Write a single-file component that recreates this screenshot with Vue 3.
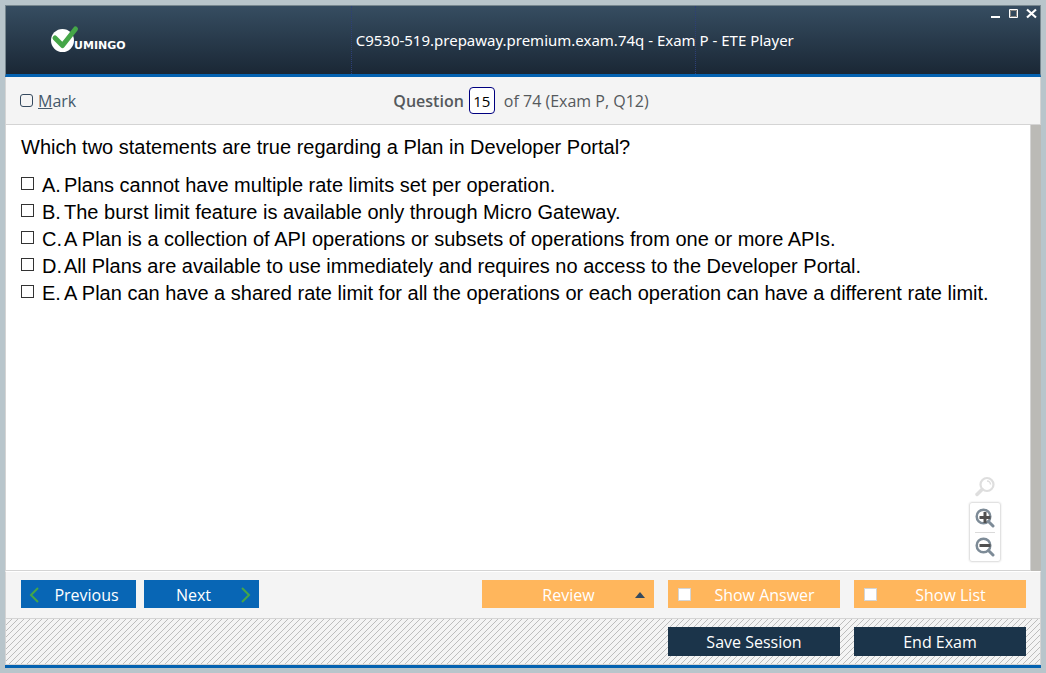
<script setup>
import { ref } from 'vue'

const options = [
  { letter: 'A', text: 'Plans cannot have multiple rate limits set per operation.' },
  { letter: 'B', text: 'The burst limit feature is available only through Micro Gateway.' },
  { letter: 'C', text: 'A Plan is a collection of API operations or subsets of operations from one or more APIs.' },
  { letter: 'D', text: 'All Plans are available to use immediately and requires no access to the Developer Portal.' },
  { letter: 'E', text: 'A Plan can have a shared rate limit for all the operations or each operation can have a different rate limit.' },
]
const chosen = ref([])
const marked = ref(false)
const number = ref('15')
const showAnswer = ref(false)
const showList = ref(false)
</script>

<template>
  <div class="desktop">
    <div class="window">
      <header class="header">
        <svg class="logo" width="84" height="30" viewBox="0 0 84 30" role="img" aria-label="Vumingo">
          <circle cx="12.500" cy="16.500" r="11.500" fill="#fff" />
          <path d="M5 14L12.500 21.500L25.500 5" fill="none" stroke="#45a648" stroke-width="5" stroke-linecap="round" stroke-linejoin="round" />
          <text class="logo-text" x="24" y="25">UMINGO</text>
        </svg>
        <h1 class="title">C9530-519.prepaway.premium.exam.74q - Exam P - ETE Player</h1>
        <div class="controls">
          <button type="button" aria-label="Minimize">
            <svg width="11" height="11" viewBox="0 0 11 11"><path d="M1 9h9" stroke="#fff" stroke-width="2" /></svg>
          </button>
          <button type="button" aria-label="Maximize">
            <svg width="11" height="11" viewBox="0 0 11 11"><path d="M1.500 1.500h8v8h-8z" fill="none" stroke="#fff" /><path d="M2.500 2.500h6v6h-6z" fill="none" stroke="#8a8782" /></svg>
          </button>
          <button type="button" aria-label="Close">
            <svg width="11" height="11" viewBox="0 0 11 11"><path d="M1 1.500l9 8M10 1.500l-9 8" stroke="#fff" stroke-width="2.200" /></svg>
          </button>
        </div>
      </header>

      <div class="toolbar">
        <label class="mark"><input v-model="marked" type="checkbox" class="mark-box"><span><u>M</u>ark</span></label>
        <div class="position">
          <label for="question-number">Question</label>
          <input id="question-number" v-model="number" type="text" class="number">
          <span>of 74 (Exam P, Q12)</span>
        </div>
      </div>

      <main class="content">
        <section class="question">
          <h2>Which two statements are true regarding a Plan in Developer Portal?</h2>
          <ul>
            <li v-for="option in options" :key="option.letter">
              <label class="option">
                <input v-model="chosen" type="checkbox" :value="option.letter">
                <span class="letter">{{ option.letter }}.</span>
                <span>{{ option.text }}</span>
              </label>
            </li>
          </ul>
          <div class="zoom">
            <svg width="22" height="22" viewBox="0 0 22 22" fill="none" stroke="#dedede">
              <circle cx="13" cy="8.500" r="6.500" stroke-width="2.200" />
              <path d="M13 5a3.500 3.500 0 0 1 3.500 3.500" stroke-width="1.500" />
              <path d="M8 13.500L3 18.500" stroke-width="3.500" stroke-linecap="round" />
            </svg>
            <div class="zoom-buttons">
              <button type="button" aria-label="Zoom in">
                <svg width="20" height="20" viewBox="0 0 20 20" fill="none">
                  <circle cx="8.500" cy="8.500" r="6.800" stroke="#7d8b97" stroke-width="2.500" />
                  <path d="M13.500 13.500L18 18" stroke="#7d8b97" stroke-width="3" stroke-linecap="round" />
                  <path d="M10 4v11M4.500 9.500h11" stroke="#505050" stroke-width="3" />
                </svg>
              </button>
              <button type="button" aria-label="Zoom out">
                <svg width="20" height="20" viewBox="0 0 20 20" fill="none">
                  <circle cx="8.500" cy="8.500" r="6.800" stroke="#7d8b97" stroke-width="2.500" />
                  <path d="M13.500 13.500L18 18" stroke="#7d8b97" stroke-width="3" stroke-linecap="round" />
                  <path d="M4.500 8.500h11" stroke="#505050" stroke-width="3" />
                </svg>
              </button>
            </div>
          </div>
        </section>
        <div class="scrollbar"></div>
      </main>

      <nav class="actions">
        <button type="button" class="btn blue">
          <svg width="12" height="18" viewBox="0 0 12 18"><path d="M9 2L2 9l7 7" fill="none" stroke="#45a648" stroke-width="2" /></svg>
          <span>Previous</span>
        </button>
        <button type="button" class="btn blue">
          <span>Next</span>
          <svg width="12" height="18" viewBox="0 0 12 18"><path d="M3 2l7 7-7 7" fill="none" stroke="#45a648" stroke-width="2" /></svg>
        </button>
        <div class="right">
          <button type="button" class="btn orange review">
            <span>Review</span>
            <svg width="10" height="6" viewBox="0 0 10 6"><path d="M0 6L5 0l5 6z" fill="#34495e" /></svg>
          </button>
          <label class="btn orange"><input v-model="showAnswer" type="checkbox"><span>Show Answer</span></label>
          <label class="btn orange"><input v-model="showList" type="checkbox"><span>Show List</span></label>
        </div>
      </nav>

      <footer class="session">
        <svg class="hatch" width="100%" height="100%" aria-hidden="true">
          <defs>
            <pattern id="hatch" width="6" height="6" patternUnits="userSpaceOnUse">
              <path d="M-1 7L7 -1M-1 1L1 -1M5 7L7 5" stroke="#bdbdbd" stroke-width="1" />
            </pattern>
          </defs>
          <rect width="100%" height="100%" fill="url(#hatch)" />
        </svg>
        <button type="button" class="btn dark">Save Session</button>
        <button type="button" class="btn dark">End Exam</button>
      </footer>
    </div>
  </div>
</template>

<style>
body {
  margin: 0;
}
</style>

<style scoped>
* {
  box-sizing: border-box;
}
button {
  border: 0;
  padding: 0;
  background: none;
  font: inherit;
  color: inherit;
}
svg {
  display: block;
  flex: none;
}
input {
  appearance: none;
  margin: 0;
  flex: none;
}
input[type="checkbox"]:checked {
  background: #34495e;
}
.desktop {
  display: flex;
  min-height: 100vh;
  padding: 5px;
  background: #b8c5cb;
  font-family: "Open Sans", "Noto Sans", sans-serif;
  font-size: 16px;
}
.window {
  flex: 1;
  display: flex;
  flex-direction: column;
  border-bottom: 3px solid #0462b1;
  background: #f4f4f4;
}
.header {
  display: grid;
  grid-template-columns: repeat(3, minmax(0, 1fr));
  height: 72px;
  border: 1px solid #77878f;
  border-bottom: 3px solid #0462b1;
  background: linear-gradient(#364d61, #1a2735);
}
.logo {
  margin: 18px 0 0 44px;
}
.title {
  display: flex;
  align-items: center;
  margin: 0;
  padding-left: 4px;
  border-left: 1px dotted #2d3f78;
  font: 15px "Noto Sans", "Open Sans", sans-serif;
  white-space: nowrap;
  color: #fff;
}
.logo-text {
  font: bold 11px "DejaVu Sans", sans-serif;
  fill: #fff;
}
.controls {
  display: flex;
  justify-content: flex-end;
  align-items: flex-start;
  gap: 7px;
  padding: 2px 3px 0 0;
  border-left: 1px dotted #2d3f78;
}
.toolbar {
  display: grid;
  grid-template-columns: 1fr auto 1fr;
  align-items: center;
  height: 48px;
  padding: 0 18px 0 14px;
  border: 1px solid #d4d4d4;
  border-top: 0;
  color: #55595c;
}
.mark {
  display: flex;
  align-items: center;
  gap: 5px;
  color: #44586a;
}
.mark-box {
  width: 13px;
  height: 13px;
  border: 1px solid #34495e;
  border-radius: 3px;
}
.position {
  display: flex;
  align-items: center;
  gap: 5px;
}
.position label {
  font-weight: 600;
}
.position span {
  margin-left: 4px;
}
.number {
  width: 26px;
  height: 27px;
  padding: 0;
  border: 1px solid #000080;
  border-radius: 4px;
  background: #fff;
  font: 15px "Open Sans", sans-serif;
  text-align: center;
  color: #000;
}
.content {
  flex: 1;
  display: flex;
  background: #fff;
  border-left: 1px solid #d4d4d4;
}
.question {
  flex: 1;
  position: relative;
  padding: 9px 15px;
  border-right: 1px solid #d4d4d4;
  border-bottom: 1px solid #d4d4d4;
  font: 20px/27px "Liberation Sans", Arial, sans-serif;
  color: #000;
}
.question h2 {
  margin: 0 0 11px;
  font: inherit;
}
.question ul {
  margin: 0;
  padding: 0;
  list-style: none;
}
.option {
  display: flex;
}
.option input {
  width: 13px;
  height: 13px;
  margin: 5px 8px 0 0;
  border: 1px solid #333;
}
.letter {
  width: 22px;
  flex: none;
}
.zoom {
  position: absolute;
  right: 29px;
  bottom: 8px;
  display: flex;
  flex-direction: column;
  align-items: center;
  gap: 4px;
}
.zoom-buttons {
  width: 32px;
  padding: 0 5px;
  border: 1px solid #e2e2e2;
  border-radius: 3px;
  box-shadow: 0 0 2px #ddd;
}
.zoom-buttons button {
  display: grid;
  place-items: center;
  width: 100%;
  height: 29px;
}
.zoom-buttons button + button {
  border-top: 1px solid #dadada;
}
.scrollbar {
  width: 10px;
  background: #bbbab6;
}
.actions {
  display: flex;
  gap: 8px;
  height: 48px;
  padding: 8px 14px 0 15px;
  border: 1px solid #d4d4d4;
  border-top: 1px solid #fff;
}
.right {
  display: flex;
  gap: 14px;
  margin-left: auto;
}
.btn {
  display: flex;
  align-items: center;
  justify-content: center;
  width: 172px;
  height: 28px;
  padding-top: 1px;
  color: #fff;
}
.btn span {
  flex: 1;
  text-align: center;
}
.blue {
  width: 115px;
  padding: 1px 8px 0;
  gap: 4px;
  background: #0866b5;
}
.orange {
  padding: 1px 10px 0;
  gap: 8px;
  background: #ffb65c;
}
.review {
  padding: 1px 9px 0 28px;
}
.orange input {
  width: 13px;
  height: 13px;
  border: 1px solid #d4d4d4;
  background: #fff;
}
.session {
  position: relative;
  display: flex;
  justify-content: flex-end;
  gap: 14px;
  height: 46px;
  padding: 8px 14px 0;
  border: 1px solid #d4d4d4;
  border-top: 0;
}
.hatch {
  position: absolute;
  inset: 0;
}
.dark {
  position: relative;
  height: 29px;
  background: #1b344a;
}
</style>
